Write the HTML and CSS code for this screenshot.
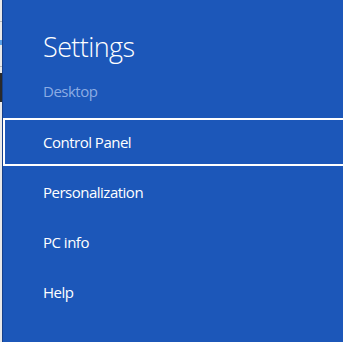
FILE: index.html
```html
<!DOCTYPE html>
<html lang="en">
<head>
    <meta charset="UTF-8">
    <meta name="viewport" content="width=device-width, initial-scale=1.0">
    <title>Settings</title>
    <link rel="stylesheet" href="styles.css">
</head>
<body>

    <!-- Bit of the page behind the charm -->
    <div class="behind">
        <div class="behind-line"></div>
        <div class="behind-tick"></div>
        <div class="behind-line"></div>
        <div class="behind-dark"></div>
    </div>

    <!-- Settings charm -->
    <div class="charm">
        <h1 class="charm-title">Settings</h1>
        <p class="charm-sub">Desktop</p>

        <ul class="charm-menu">
            <li class="charm-item focused">Control Panel</li>
            <li class="charm-item">Personalization</li>
            <li class="charm-item">PC info</li>
            <li class="charm-item">Help</li>
        </ul>
    </div>

</body>
</html>
```

FILE: styles.css
```css
/* General */
body {
    margin: 0;
    display: flex;
    height: 342px;
    overflow: hidden;
    font-family: 'Open Sans', 'Noto Sans', sans-serif;
    background: #ececec;
}

/* Strip of the desktop showing on the left */
.behind {
    width: 2px;
    flex: none;
    display: flex;
    flex-direction: column;
    background: #e9e9e9;
}

.behind-line {
    height: 1px;
    margin-top: 21px;
    background: #b8b8b8;
}

.behind-tick {
    height: 5px;
    margin-top: 18px;
    background: #5aa0e8;
}

.behind-dark {
    height: 29px;
    margin-top: 6px;
    background: #2a2a2a;
}

/* Blue panel */
.charm {
    flex: none;
    width: 340px;
    background: #1c57b9;
    border-left: 1px solid #17408a;
    color: #fff;
}

.charm-title {
    margin: 29px 0 0 40px;
    font-size: 27px;
    font-weight: 300;
    line-height: 36px;
    letter-spacing: -0.6px;
}

.charm-sub {
    margin: 16px 0 0 40px;
    font-size: 15px;
    line-height: 20px;
    letter-spacing: -0.5px;
    color: #8bace4;
}

.charm-menu {
    list-style: none;
    margin: 0;
    padding: 0;
    margin-top: 17px;
}

.charm-item {
    box-sizing: border-box;
    width: 350px;
    height: 48px;
    margin-bottom: 2px;
    padding-left: 40px;
    display: flex;
    align-items: center;
    font-size: 15px;
    letter-spacing: -0.5px;
}

.charm-item.focused {
    border: 2px solid #fff;
    padding-left: 38px;
}
```
